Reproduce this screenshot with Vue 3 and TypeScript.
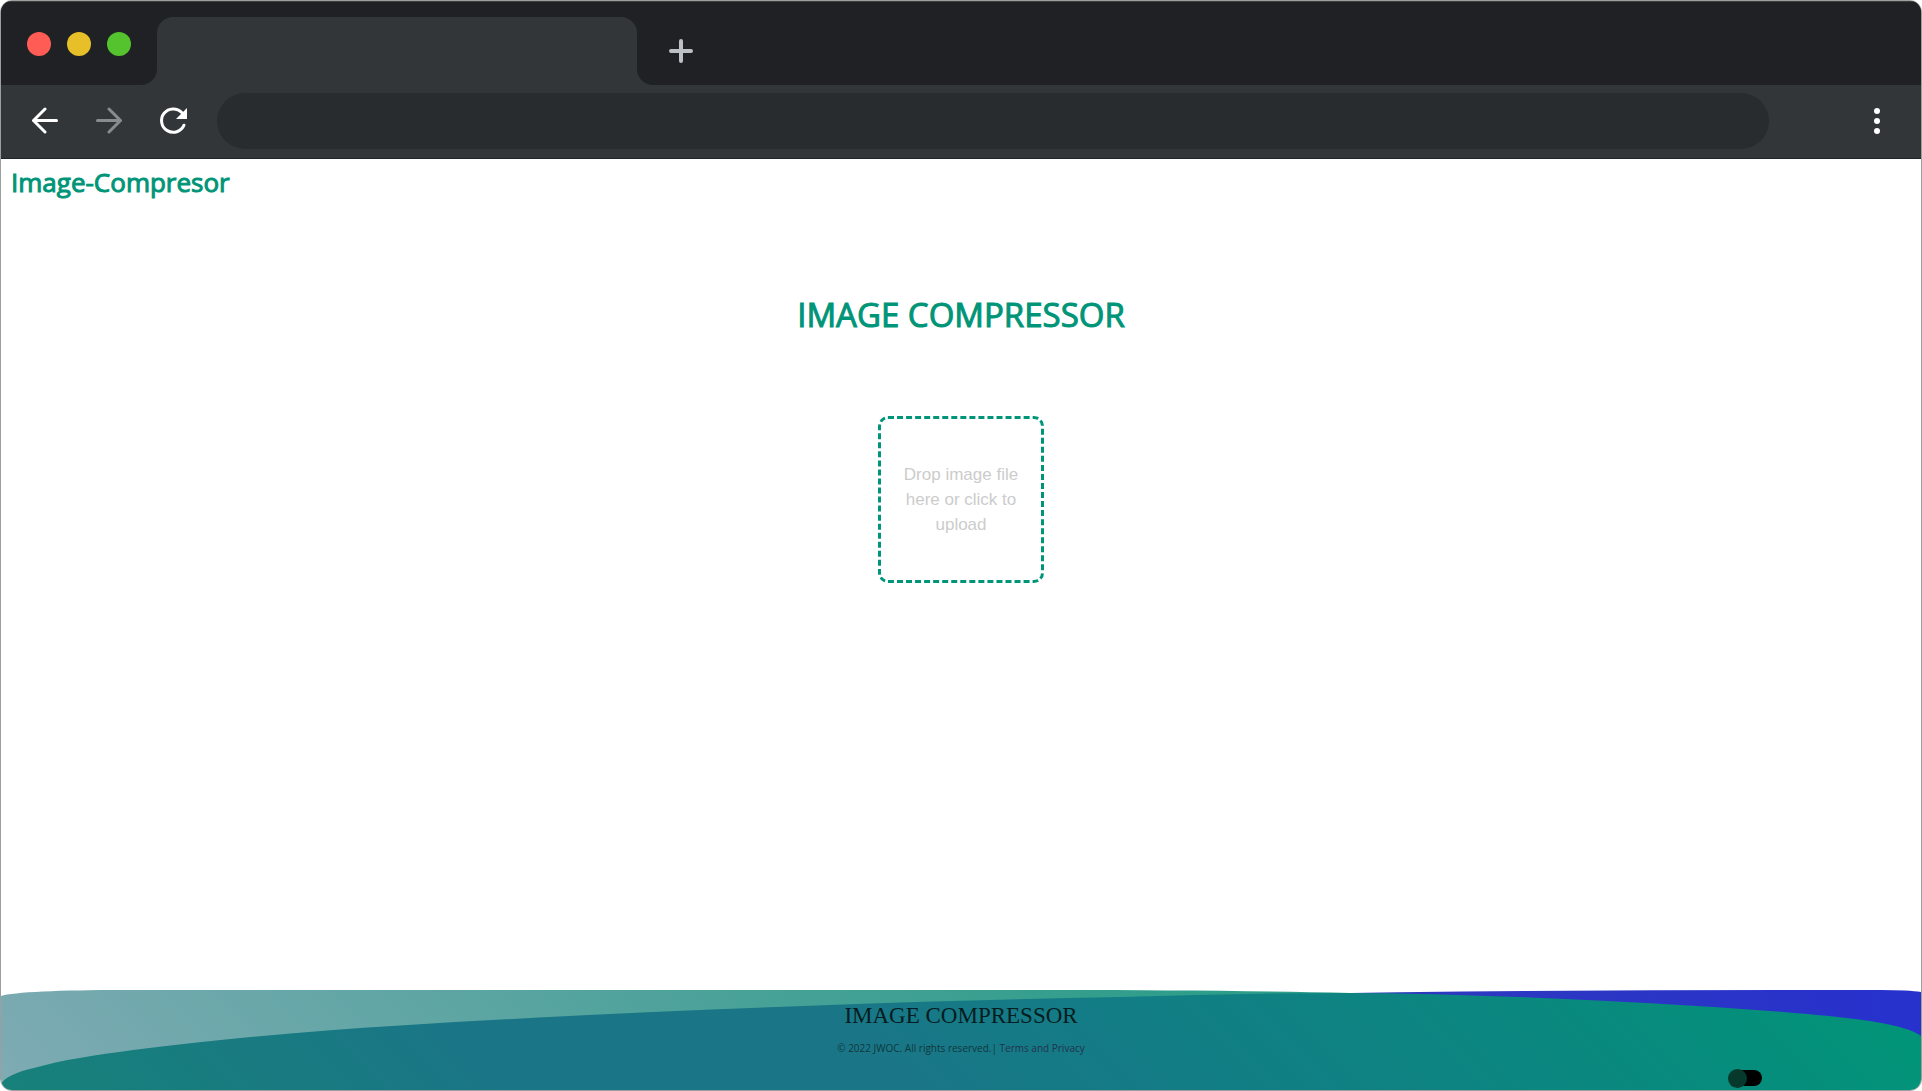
<script setup lang="ts">
import { ref } from 'vue'

const dark = ref(false)
const lights: string[] = ['#ff5c55', '#e6bf29', '#54c32e']
</script>

<template>
  <div class="window">
    <div class="chrome">
      <div class="tabs">
        <div class="lights">
          <span v-for="c in lights" :key="c" class="light" :style="{ background: c }"></span>
        </div>
        <div class="tab"></div>
        <div class="tabs-rest">
          <button class="icon-btn" type="button" aria-label="New tab">
            <svg width="24" height="24" viewBox="0 0 24 24" fill="none" stroke="#bdc1c6" stroke-width="4" stroke-linecap="round">
              <path d="M12 2v20M2 12h20" />
            </svg>
          </button>
        </div>
      </div>
      <div class="toolbar">
        <div class="nav-buttons">
          <button class="icon-btn" type="button" aria-label="Back">
            <svg width="28" height="28" viewBox="0 0 28 28" fill="none" stroke="#fff" stroke-width="3" stroke-linecap="round" stroke-linejoin="round">
              <path d="M25.500 13.500H2.500M14 2L2.500 13.500L14 25" />
            </svg>
          </button>
          <button class="icon-btn" type="button" aria-label="Forward">
            <svg width="28" height="28" viewBox="0 0 28 28" fill="none" stroke="#898c8e" stroke-width="3" stroke-linecap="round" stroke-linejoin="round">
              <path d="M2.500 13.500H25.500M14 2L25.500 13.500L14 25" />
            </svg>
          </button>
          <button class="icon-btn" type="button" aria-label="Reload">
            <svg width="28" height="28" viewBox="0 0 28 28">
              <path d="M25 18.200A11.700 11.700 0 1 1 22.700 5.500" fill="none" stroke="#fff" stroke-width="3" stroke-linecap="round" />
              <path d="M28 1V12H17Z" fill="#fff" />
            </svg>
          </button>
        </div>
        <input class="address" type="text" aria-label="Address" />
        <button class="icon-btn" type="button" aria-label="Menu">
          <svg width="8" height="28" viewBox="0 0 8 28" fill="#fff">
            <circle cx="4" cy="4" r="3" /><circle cx="4" cy="14" r="3" /><circle cx="4" cy="24" r="3" />
          </svg>
        </button>
      </div>
    </div>

    <nav><a class="brand" href="#">Image-Compresor</a></nav>

    <main>
      <h1>IMAGE COMPRESSOR</h1>
      <label class="drop">
        <span>Drop image file here or click to upload</span>
        <input class="file" type="file" accept="image/*" />
      </label>
    </main>

    <footer>
      <svg class="waves" viewBox="0 0 1920 100" preserveAspectRatio="none" aria-hidden="true">
        <defs>
          <linearGradient id="pale" gradientUnits="userSpaceOnUse" x1="455" y1="555" x2="1465" y2="-455">
            <stop offset="0" stop-color="#80abb4" />
            <stop offset=".23" stop-color="#62a6a6" />
            <stop offset=".44" stop-color="#45a196" />
            <stop offset=".65" stop-color="#2d9d89" />
          </linearGradient>
          <linearGradient id="teal" gradientUnits="userSpaceOnUse" x1="455" y1="555" x2="1465" y2="-455">
            <stop offset="0" stop-color="#17817a" />
            <stop offset=".25" stop-color="#1a7686" />
            <stop offset=".45" stop-color="#1a7687" />
            <stop offset=".6" stop-color="#127d85" />
            <stop offset=".78" stop-color="#0b8780" />
            <stop offset="1" stop-color="#009677" />
          </linearGradient>
          <linearGradient id="blue" gradientUnits="userSpaceOnUse" x1="1300" y1="0" x2="1920" y2="0">
            <stop offset="0" stop-color="#2f3abc" />
            <stop offset="1" stop-color="#2731cd" />
          </linearGradient>
        </defs>
        <path fill="url(#blue)" d="M1200 6C1400 1 1600 0 1800 0H1880Q1908 0 1920 2V60H1200Z" />
        <path fill="url(#pale)" d="M0 6C12 2 60 0 120 0H1060C1160 0 1260 1 1350 3L1400 6V20L0 100Z" />
        <path fill="url(#teal)" d="M0 94C3 88 15 82 33 78C60 70 95 65 132 60C221 48.500 310 41 399 35.500C542 26.500 686 20 829 15C926 11.500 1022 9 1119 7C1193 5 1266 3 1340 3C1403 3 1466 5 1529 7.500C1615 11 1702 15.500 1788 22.500C1813 24.500 1834 26.500 1854 29C1884 33 1910 38 1920 46V100H0Z" />
      </svg>
      <div class="foot-title">IMAGE COMPRESSOR</div>
      <p>© 2022 JWOC. All rights reserved.| <a href="#">Terms and Privacy</a></p>
      <input v-model="dark" class="toggle" type="checkbox" aria-label="Dark mode" />
    </footer>
  </div>
</template>

<style>
body {
  margin: 0;
  background: #fff;
}
</style>

<style scoped>
.window {
  box-sizing: border-box;
  min-height: 100vh;
  display: flex;
  flex-direction: column;
  border: 1px solid #9d9f9e;
  border-radius: 12px;
  overflow: hidden;
  background: #fff;
  font-family: "Open Sans", "Noto Sans", sans-serif;
}
.chrome {
  background: #323639;
  border-bottom: 1px solid #222527;
}
.tabs {
  display: flex;
  height: 84px;
}
.lights {
  box-sizing: border-box;
  width: 156px;
  padding: 30px 0 0 26px;
  display: flex;
  gap: 16px;
  background: #202124;
  border-bottom-right-radius: 16px;
  border-top: 1px solid #3c403f;
}
.light {
  width: 24px;
  height: 24px;
  border-radius: 50%;
}
.tab {
  width: 480px;
  position: relative;
  background: linear-gradient(#3c403f 1px, #202124 1px, #202124 32px, #323639 32px);
}
.tab::before {
  content: "";
  position: absolute;
  inset: 16px 0 0;
  background: #323639;
  border-radius: 16px 16px 0 0;
}
.tabs-rest {
  flex: 1;
  padding: 37px 0 0 32px;
  background: #202124;
  border-bottom-left-radius: 16px;
  border-top: 1px solid #3c403f;
}
.icon-btn {
  display: block;
  padding: 0;
  border: 0;
  background: none;
  flex: none;
}
.icon-btn svg {
  display: block;
}
.toolbar {
  display: flex;
  align-items: center;
  padding: 8px 40px 9px 30px;
}
.nav-buttons {
  display: flex;
  gap: 36px;
  margin-right: 30px;
}
.address {
  box-sizing: border-box;
  flex: 1;
  min-width: 0;
  height: 56px;
  margin-right: 104px;
  padding: 0 28px;
  border: 0;
  border-radius: 28px;
  background: #282c2e;
  color: #fff;
  font-size: 20px;
}
nav {
  padding: 3px 10px 5px;
}
.brand,
h1 {
  color: #009578;
  font-weight: 500;
  -webkit-text-stroke: 1px #009578;
}
.brand {
  font-size: 26px;
  line-height: 40px;
  text-decoration: none;
}
main {
  flex: 1;
  display: flex;
  flex-direction: column;
  align-items: center;
  padding-top: 82px;
}
h1 {
  margin: 0 0 75px;
  font-size: 33px;
  line-height: 52px;
}
.drop {
  box-sizing: border-box;
  width: 166px;
  height: 167px;
  padding: 22px;
  display: flex;
  align-items: center;
  text-align: center;
  border: 3px dashed #009578;
  border-radius: 10px;
  color: #ccc;
  font: 17px/25px "Liberation Sans", Arial, sans-serif;
}
.file {
  position: absolute;
  width: 1px;
  height: 1px;
  opacity: 0;
}
footer {
  position: relative;
  box-sizing: border-box;
  height: 100px;
  padding-top: 11px;
  text-align: center;
}
.waves {
  position: absolute;
  inset: 0;
  width: 100%;
  height: 100%;
}
.foot-title {
  position: relative;
  color: #051d21;
  font: 23px/30px "Liberation Serif", serif;
}
footer p {
  position: relative;
  margin: 8px 0 0;
  color: #0e373d;
  font-size: 10px;
  line-height: 18px;
}
footer p a {
  color: #20324f;
  text-decoration: none;
}
.toggle {
  appearance: none;
  position: absolute;
  right: 159px;
  bottom: 4px;
  width: 30px;
  height: 16px;
  margin: 0;
  border-radius: 8px;
  background: #000;
}
.toggle::before {
  content: "";
  position: absolute;
  left: -4px;
  top: -1px;
  width: 19px;
  height: 19px;
  border-radius: 50%;
  background: #06382c;
}
.toggle:checked::before {
  left: 15px;
}
</style>
